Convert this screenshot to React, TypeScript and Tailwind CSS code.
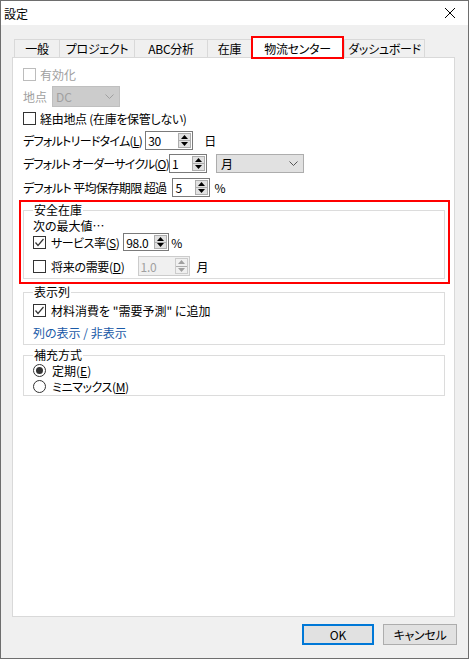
import React from "react";

function CheckBox({ checked, disabled }: { checked?: boolean; disabled?: boolean }) {
  return (
    <span
      className={
        "flex h-[13px] w-[13px] shrink-0 items-center justify-center border bg-white " +
        (disabled ? "border-[#bcbcbc]" : "border-[#333333]")
      }
    >
      {checked && (
        <svg width="11" height="11" viewBox="0 0 11 11">
          <path d="M1.5 5.5 L4 8.5 L9.5 2" fill="none" stroke="#333" strokeWidth="1.2" />
        </svg>
      )}
    </span>
  );
}

function Radio({ checked }: { checked?: boolean }) {
  return (
    <span className="flex h-[13px] w-[13px] shrink-0 items-center justify-center rounded-full border border-[#333333] bg-white">
      {checked && <span className="h-[7px] w-[7px] rounded-full bg-[#333333]" />}
    </span>
  );
}

function Chevron({ color }: { color: string }) {
  return (
    <svg width="9" height="5" viewBox="0 0 9 5">
      <path d="M0.5 0.5 L4.5 4.5 L8.5 0.5" fill="none" stroke={color} strokeWidth="1" />
    </svg>
  );
}

function Spin({
  value,
  width,
  height,
  disabled,
}: {
  value: string;
  width: string;
  height: string;
  disabled?: boolean;
}) {
  const arrow = disabled ? "#a0a0a0" : "#000";
  return (
    <div
      className={
        "flex shrink-0 border " +
        width +
        " " +
        height +
        (disabled ? " border-[#cccccc] bg-[#f0f0f0] text-[#a0a0a0]" : " border-[#7a7a7a] bg-white")
      }
    >
      <span className="flex flex-1 items-center pl-[2px] tracking-[-0.3px]">{value}</span>
      <div
        className={
          "my-[1px] mr-[1px] flex w-[13px] flex-col border " +
          (disabled ? "border-[#cccccc] bg-[#f0f0f0]" : "border-[#adadad] bg-[#e1e1e1]")
        }
      >
        <span className="flex flex-1 items-center justify-center border-b border-[#adadad]">
          <svg width="7" height="4" viewBox="0 0 7 4">
            <path d="M0 4 L3.5 0 L7 4 Z" fill={arrow} />
          </svg>
        </span>
        <span className="flex flex-1 items-center justify-center">
          <svg width="7" height="4" viewBox="0 0 7 4">
            <path d="M0 0 L3.5 4 L7 0 Z" fill={arrow} />
          </svg>
        </span>
      </div>
    </div>
  );
}

const tabs = [
  { label: "一般", w: "w-[45px]" },
  { label: "プロジェクト", w: "w-[75px]" },
  { label: "ABC分析", w: "w-[73px]" },
  { label: "在庫", w: "w-[44px]" },
];

export default function App() {
  return (
    <div className="flex h-[659px] w-[469px] flex-col border border-[#6e6e6e] bg-[#f0f0f0] font-['Noto_Sans_CJK_JP',sans-serif] text-[12px] leading-[15px] text-black [font-feature-settings:'palt']">
      <div className="flex h-[24px] shrink-0 items-center justify-between bg-white pl-[3px] pr-[13px]">
        <span>設定</span>
        <svg width="10" height="10" viewBox="0 0 10 10">
          <path d="M0 0 L10 10 M10 0 L0 10" stroke="#000" strokeWidth="1" />
        </svg>
      </div>

      <div className="mt-[11px] ml-[13px] flex h-[21px] items-end">
        {tabs.map((t) => (
          <div
            key={t.label}
            className={
              "flex h-[18px] items-center justify-center border-t border-l border-[#d9d9d9] bg-[#f0f0f0] tracking-[-0.3px] " +
              t.w
            }
          >
            {t.label}
          </div>
        ))}
        <div className="relative z-10 -mb-[2px] flex h-[23px] w-[93px] items-center justify-center border-2 border-[#ff0000] bg-white pt-[1px] tracking-[-0.3px]">
          物流センター
        </div>
        <div className="flex h-[18px] w-[81px] items-center justify-center border-x border-t border-[#d9d9d9] bg-[#f0f0f0] tracking-[-0.3px]">
          ダッシュボード
        </div>
      </div>

      <div className="ml-[11px] flex h-[560px] w-[443px] flex-col border border-[#d9d9d9] bg-white pt-[5px] pr-[9px] pl-[10px]">
        <div className="flex h-[22px] items-center gap-[4px] text-[#a0a0a0]">
          <CheckBox disabled />
          <span>有効化</span>
        </div>
        <div className="flex h-[22px] items-center text-[#a0a0a0]">
          <span className="w-[29px]">地点</span>
          <div className="flex h-[21px] w-[68px] items-center justify-between border border-[#bfbfbf] bg-[#cccccc] pr-[5px] pl-[3px]">
            <span>DC</span>
            <Chevron color="#a0a0a0" />
          </div>
        </div>
        <div className="flex h-[22px] items-center gap-[4px]">
          <CheckBox />
          <span className="tracking-[-0.3px]">経由地点 (在庫を保管しない)</span>
        </div>
        <div className="flex h-[23px] items-center">
          <span className="mr-[3px] whitespace-nowrap tracking-[-0.7px]">
            デフォルトリードタイム(<u>L</u>)
          </span>
          <Spin value="30" width="w-[48px]" height="h-[19px]" />
          <span className="ml-[11px]">日</span>
        </div>
        <div className="flex h-[23px] items-center">
          <span className="whitespace-nowrap tracking-[-0.8px]">
            デフォルト オーダーサイクル(<u>O</u>)
          </span>
          <Spin value="1" width="w-[38px]" height="h-[19px]" />
          <div className="ml-[9px] flex h-[19px] w-[88px] items-center justify-between border border-[#adadad] bg-[#e1e1e1] pr-[5px] pl-[4px]">
            <span>月</span>
            <Chevron color="#555" />
          </div>
        </div>
        <div className="flex h-[24px] items-center">
          <span className="mr-[6px] whitespace-nowrap tracking-[-0.6px]">デフォルト 平均保存期限 超過</span>
          <Spin value="5" width="w-[38px]" height="h-[19px]" />
          <span className="ml-[4px]">%</span>
        </div>

        <div className="-mr-[5px] -ml-[4px] mt-[1px] border-2 border-[#ff0000] pt-[1px] pr-[3px] pb-[3px] pl-[2px]">
          <fieldset className="border border-[#dcdcdc] pr-[8px] pb-[2px] pl-[9px]">
            <legend className="px-[1px] leading-[14px]">安全在庫</legend>
            <div className="flex h-[16px] items-center">次の最大値…</div>
            <div className="flex h-[18px] items-center">
              <CheckBox checked />
              <span className="mr-[4px] ml-[5px] whitespace-nowrap tracking-[-0.5px]">
                サービス率(<u>S</u>)
              </span>
              <Spin value="98.0" width="w-[46px]" height="h-[18px]" />
              <span className="ml-[2px]">%</span>
            </div>
            <div className="mt-[5px] flex h-[20px] items-center">
              <CheckBox />
              <span className="mr-[13px] ml-[5px] whitespace-nowrap tracking-[-0.3px]">
                将来の需要(<u>D</u>)
              </span>
              <Spin value="1.0" width="w-[52px]" height="h-[20px]" disabled />
              <span className="ml-[7px]">月</span>
            </div>
          </fieldset>
        </div>

        <fieldset className="mt-[1px] border border-[#dcdcdc] pr-[8px] pb-[1px] pl-[9px]">
          <legend className="px-[1px] leading-[14px]">表示列</legend>
          <div className="flex h-[22px] items-center gap-[5px]">
            <CheckBox checked />
            <span>材料消費を "需要予測" に追加</span>
          </div>
          <div className="flex h-[22px] items-center text-[#1a5aa8]">列の表示 / 非表示</div>
        </fieldset>

        <fieldset className="mt-[4px] border border-[#dcdcdc] pr-[8px] pb-[1px] pl-[9px]">
          <legend className="px-[1px] leading-[12px]">補充方式</legend>
          <div className="mt-[2px] flex h-[15px] items-center gap-[6px]">
            <Radio checked />
            <span className="leading-[13px]">
              定期(<u>E</u>)
            </span>
          </div>
          <div className="mt-[1px] flex h-[15px] items-center gap-[6px]">
            <Radio />
            <span className="leading-[13px] tracking-[-0.4px]">
              ミニマックス(<u>M</u>)
            </span>
          </div>
        </fieldset>
      </div>

      <div className="mt-[7px] flex justify-end gap-[9px] pr-[11px]">
        <button className="flex h-[21px] w-[72px] items-center justify-center border-2 border-[#0078d7] bg-[#e1e1e1]">
          OK
        </button>
        <button className="flex h-[21px] w-[74px] items-center justify-center border border-[#adadad] bg-[#e1e1e1] tracking-[-0.3px]">
          キャンセル
        </button>
      </div>
    </div>
  );
}
